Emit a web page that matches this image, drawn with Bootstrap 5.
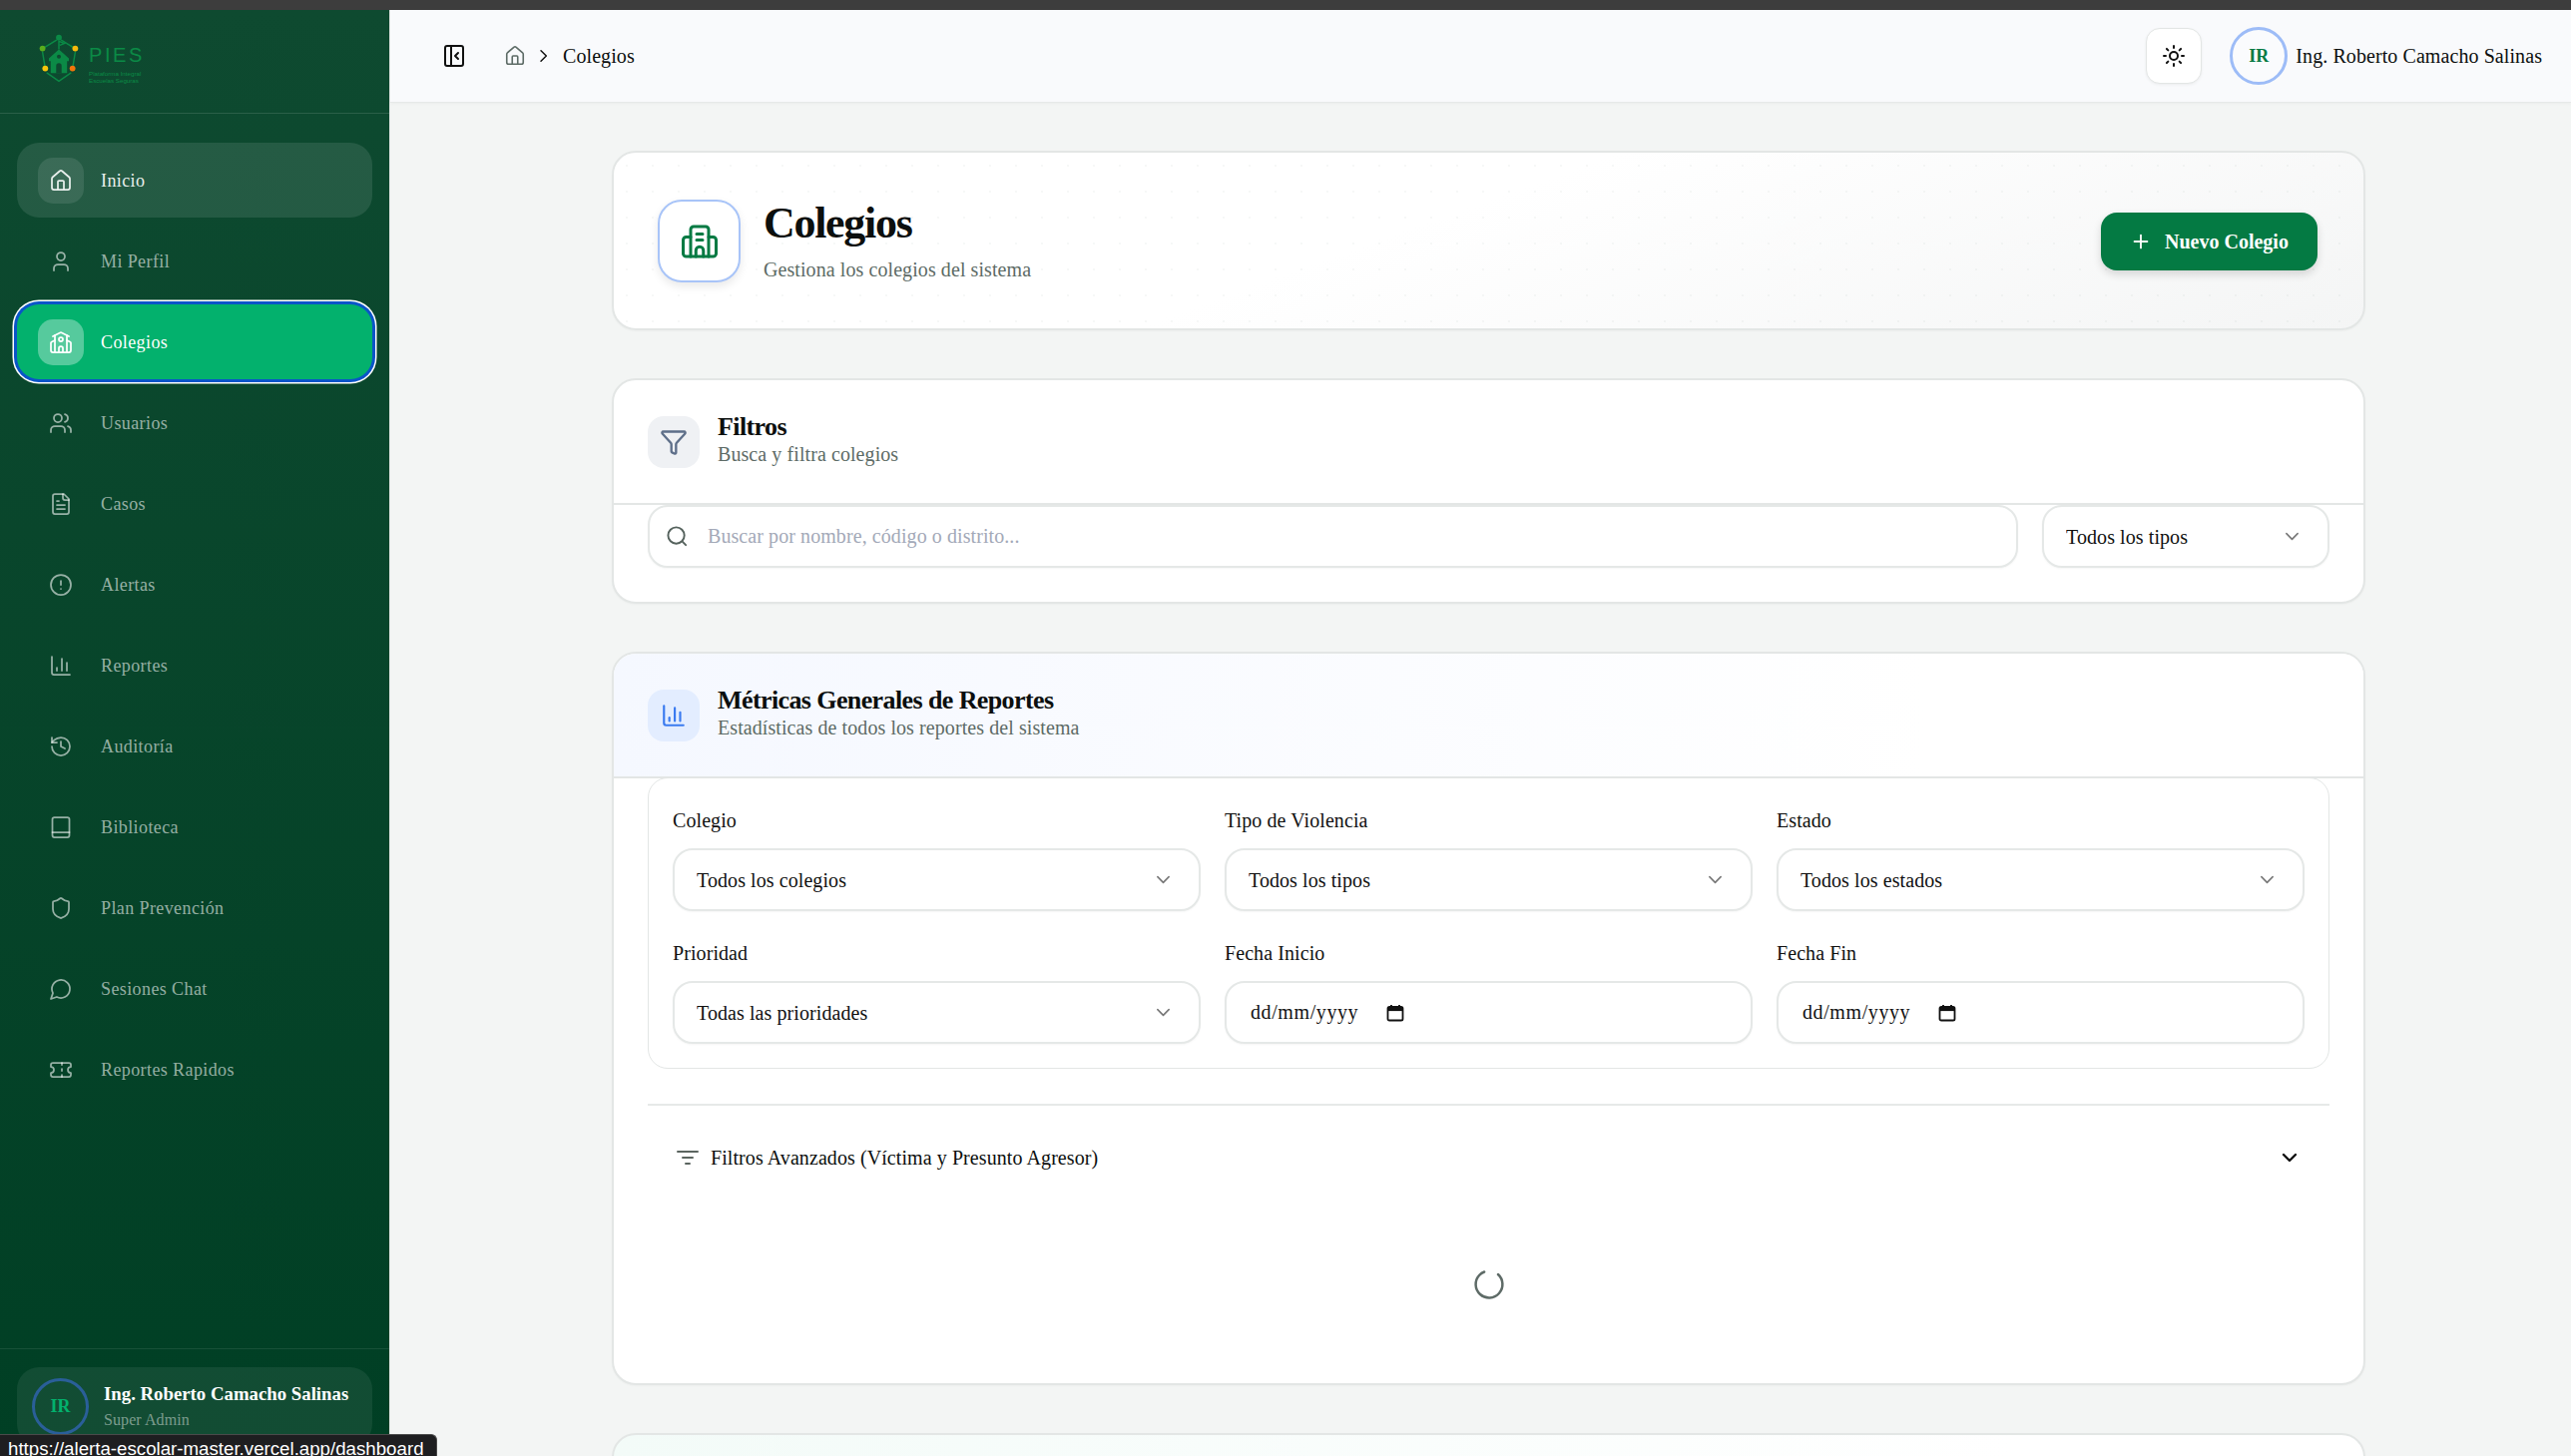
<!DOCTYPE html>
<html lang="es">
<head>
<meta charset="utf-8">
<title>Colegios</title>
<link href="https://cdn.jsdelivr.net/npm/bootstrap@5.3.0/dist/css/bootstrap.min.css" rel="stylesheet">
<style>
html,body{height:1459px;overflow:hidden}
body{background:#f3f5f4;font-family:"Liberation Serif","Times New Roman",serif;font-size:20px;color:#0c0f0e;letter-spacing:.08px}
.topstrip{height:10px;background:#3d3d3d;flex:none}
.shell{height:1449px;overflow:hidden}
.side{width:391px;flex:none;background:linear-gradient(180deg,#0e4a30 0%,#003f24 100%);height:100%;overflow:hidden;border-right:1px solid #dfe5e2}
.side-head{height:104px;flex:none;border-bottom:1px solid rgba(255,255,255,.12);padding:24px 0 0 38px}
.logo-mark{margin-right:9px;flex:none}
.logo-t{color:#0b8a46;line-height:1;letter-spacing:0}
.logo-big{font-family:"Liberation Sans",sans-serif;font-size:20px;letter-spacing:2.6px;margin-top:11px}
.logo-small{font-family:"Liberation Sans",sans-serif;font-size:6.2px;line-height:7.4px;margin-top:5px;white-space:pre-line}
.side-nav{flex:1 1 0;padding:29px 17px 0;gap:6px}
.side-nav .nav-link{height:75px;border-radius:22px;padding:2px 21px 0;display:flex;align-items:center;gap:17px;color:rgba(255,255,255,.58);font-size:18px;letter-spacing:.4px}
.side-nav .nav-link svg{width:24px;height:24px;stroke-width:1.75}
.ico-slot{width:46px;height:46px;border-radius:15px;flex:none;display:flex;align-items:center;justify-content:center;margin-top:-2px}
.side-nav .is-home{background:rgba(255,255,255,.1);color:#e9efec}
.side-nav .is-home .ico-slot{background:rgba(255,255,255,.1)}
.side-nav .is-on{background:#03b16d;color:#fff;box-shadow:0 0 0 3px #0a55c8,0 0 0 4.5px #fff}
.side-nav .is-on .ico-slot{background:rgba(255,255,255,.33)}
.side-foot{height:108px;flex:none;border-top:1px solid rgba(255,255,255,.09);padding:18px 17px 0}
.user-tile{height:79px;border-radius:22px;background:rgba(255,255,255,.07);padding:11px 15px;gap:15px}
.ava-s{width:57px;height:57px;border-radius:50%;border:3px solid #2a5f99;color:#03b16d;font-weight:700;font-size:18px;flex:none}
.uname{color:#fff;font-weight:700;font-size:18.8px;line-height:22px;letter-spacing:0;margin-top:1px}
.urole{color:rgba(255,255,255,.45);font-size:16px;line-height:22px;margin-top:4px}
.tip-url{position:fixed;left:0;bottom:0;width:438px;height:22px;background:#1e1e20;border:1px solid #4a4a4a;border-left:0;border-bottom:0;border-radius:0 6px 0 0;color:#fff;font-family:"Liberation Sans",sans-serif;font-size:18.7px;letter-spacing:0;line-height:28px;padding-left:8px;overflow:hidden;white-space:nowrap;z-index:10}
.top-bar{height:93px;flex:none;background:#f9fafc;border-bottom:1px solid #e6e9e8;box-shadow:0 1px 3px rgba(0,0,0,.04);padding:0 29px 0 52px}
.bar-ico{width:24px;height:24px;flex:none}
.crumb{margin-left:38px;gap:9px}
.crumb-now{margin-left:3px}
.theme-btn{width:56px;height:56px;background:#fff;border:1px solid #e3e6e5;border-radius:14px;box-shadow:0 1px 3px rgba(0,0,0,.06);padding:0;display:flex;align-items:center;justify-content:center;color:#111}
.ava-top{width:58px;height:58px;border-radius:50%;border:3px solid #9dbcf7;color:#047a43;font-weight:700;font-size:18px;margin:0 8px 0 28px;background:#fafbfd}
.page-area{padding:48px 206px 0 222px;overflow:hidden;flex:1 1 0}
.pane{border:2px solid #e3e6e5;border-radius:24px;background:#fff;margin-bottom:48px;box-shadow:0 1px 2px rgba(0,0,0,.03)}
.hero{height:180px;padding:0 46px 0 44px;background-color:transparent;background-image:radial-gradient(rgba(20,60,40,.035) 1px,transparent 1.2px),linear-gradient(160deg,#fff 45%,#f4f5f5 100%);background-size:26px 26px,100% 100%}
.hero-ico{width:83px;height:83px;border:2px solid #a8c4f8;border-radius:24px;background:#fff;box-shadow:0 4px 10px rgba(0,0,0,.09);color:#047a43;flex:none;margin-right:23px;margin-top:1px}
.hero-txt{margin-bottom:2px}
.hero h1{font-size:44px;font-weight:700;letter-spacing:-1.3px;line-height:50px;margin:0}
.hero p{font-size:20px;color:#5d6b66;line-height:24px;margin:9px 0 0}
.add-btn{width:217px;height:58px;background:#047a43;border:0;border-radius:16px;color:#fff;font-weight:700;font-size:20px;box-shadow:0 4px 8px rgba(0,0,0,.14);gap:13px;padding:0;margin-top:1px;display:flex;align-items:center;justify-content:center}
.add-btn:hover{background:#047a43;color:#fff}
.pane-head{height:125px;padding:0 34px;background:transparent;border-bottom:2px solid #e3e6e5;border-radius:22px 22px 0 0;gap:18px}
.metrics-head{background:linear-gradient(90deg,#f5f8ff 0%,#fff 75%)}
.head-txt{margin-bottom:6px}
.sq-ico{width:52px;height:52px;border-radius:16px;flex:none}
.sq-gray{background:#eff1f4;color:#5e6f89}
.sq-blue{background:#e3edff;color:#3b7bf0}
.pane-title{font-size:26px;font-weight:700;letter-spacing:-.6px;line-height:30px;margin:0}
.pane-sub{font-size:20px;color:#5d6b66;line-height:24px;margin:0}
.f-ctl{height:63px;border:2px solid #e5e8e7;border-radius:20px;font-size:20px;letter-spacing:.08px;color:#111;padding:0 22px;box-shadow:0 1px 2px rgba(0,0,0,.04);background-color:#fff}
select.f-ctl{background-image:url("data:image/svg+xml,%3csvg xmlns='http://www.w3.org/2000/svg' viewBox='0 0 16 16'%3e%3cpath fill='none' stroke='%23777' stroke-linecap='round' stroke-linejoin='round' stroke-width='1.7' d='m2 5 6 6 6-6'/%3e%3c/svg%3e");background-position:right 28px center;background-size:15px 15px}
.f-ctl::placeholder{color:#a3a9b8}
.date-ctl{padding-left:24px;letter-spacing:.6px}
.cal-ico{position:absolute;left:161px;bottom:21px;width:20px;height:20px;pointer-events:none}
.search-ico{position:absolute;left:18px;top:20px;width:23px;height:23px;color:#55625d}
.filter-body{padding:0 34px 34px;gap:24px}
.metrics-body{padding:0 34px 24px}
.inner-box{border:1px solid #e3e6e5;border-radius:20px;padding:27px 24px 24px;margin-top:-1px}
.inner-row{--bs-gutter-x:24px;--bs-gutter-y:27px}
.f-label{font-size:20px;line-height:30px;margin:0 0 13px;color:#111}
.rule-line{height:2px;background:#e6e9e8;margin-top:35px}
.adv-row{height:104px;padding:0 28px 0 28px;gap:11px;font-size:20px}
.spin-zone{height:150px}
.mint-pane{height:60px;border-radius:24px;background:linear-gradient(90deg,#f3fbf8,#fff 80%);margin:0}
</style>
</head>
<body class="d-flex flex-column">
<svg width="0" height="0" class="position-absolute">
<defs>
<g id="i-house"><path d="M15 21v-8a1 1 0 0 0-1-1h-4a1 1 0 0 0-1 1v8"/><path d="M3 10a2 2 0 0 1 .709-1.528l7-5.999a2 2 0 0 1 2.582 0l7 5.999A2 2 0 0 1 21 10v9a2 2 0 0 1-2 2H5a2 2 0 0 1-2-2z"/></g>
<g id="i-chart"><path d="M3 3v16a2 2 0 0 0 2 2h16"/><path d="M18 17V9"/><path d="M13 17V5"/><path d="M8 17v-3"/></g>
<g id="i-chev"><path d="m6 9 6 6 6-6"/></g>
<g id="i-cal"><rect x="2.5" y="4" width="15" height="13.5" rx="1.6" fill="none" stroke="#111" stroke-width="1.8"/><path d="M2.5 4.5h15v3.6h-15z" fill="#111"/><path d="M6 2v3M14 2v3" stroke="#111" stroke-width="1.8"/></g>
</defs>
</svg>
<div class="topstrip"></div>
<div class="shell d-flex">
<aside class="side d-flex flex-column">
  <div class="side-head d-flex">
    <svg class="logo-mark" width="42" height="51" viewBox="0 0 46 56" fill="none">
      <path d="M7 15 20 7M26 7l13 8M5 20l3 18M41 20l-3 18M10 43l13 9 13-9" stroke="#0b8a46" stroke-width="1.6" stroke-linecap="round"/>
      <path d="M12 27 23 17l11 10v3h-2v13H14V30h-2z" fill="#0b8a46"/>
      <path d="M23 17V8l6 2.5-5 2" stroke="#0b8a46" stroke-width="1.6"/>
      <circle cx="23" cy="25" r="2.2" fill="#0e4a30"/><path d="M20 43v-8a3 3 0 0 1 6 0v8z" fill="#0e4a30"/>
      <circle cx="23" cy="4" r="3.2" fill="#0b8a46"/><circle cx="5" cy="16" r="3.2" fill="#5aad1d"/><circle cx="41" cy="16" r="3.2" fill="#f8b90b"/><circle cx="8" cy="38" r="3.2" fill="#f8c40b"/><circle cx="38" cy="38" r="3.2" fill="#f2760b"/>
    </svg>
    <div class="logo-t">
      <div class="logo-big">PIES</div>
      <div class="logo-small">Plataforma Integral
Escuelas Seguras</div>
    </div>
  </div>
  <nav class="nav flex-column flex-nowrap side-nav">
    <a class="nav-link is-home" href="#"><span class="ico-slot"><svg viewBox="0 0 24 24" fill="none" stroke="currentColor" stroke-linecap="round" stroke-linejoin="round"><use href="#i-house"/></svg></span>Inicio</a>
    <a class="nav-link" href="#"><span class="ico-slot"><svg viewBox="0 0 24 24" fill="none" stroke="currentColor" stroke-linecap="round" stroke-linejoin="round"><path d="M19 21v-2a4 4 0 0 0-4-4H9a4 4 0 0 0-4 4v2"/><circle cx="12" cy="7" r="4"/></svg></span>Mi Perfil</a>
    <a class="nav-link is-on" href="#"><span class="ico-slot"><svg viewBox="0 0 24 24" fill="none" stroke="currentColor" stroke-linecap="round" stroke-linejoin="round"><path d="M14 22v-4a2 2 0 1 0-4 0v4"/><path d="m18 10 3.447 1.724a1 1 0 0 1 .553.894V20a2 2 0 0 1-2 2H4a2 2 0 0 1-2-2v-7.382a1 1 0 0 1 .553-.894L6 10"/><path d="M18 5v17"/><path d="m4 6 7.106-3.553a2 2 0 0 1 1.788 0L20 6"/><path d="M6 5v17"/><circle cx="12" cy="9" r="2"/></svg></span>Colegios</a>
    <a class="nav-link" href="#"><span class="ico-slot"><svg viewBox="0 0 24 24" fill="none" stroke="currentColor" stroke-linecap="round" stroke-linejoin="round"><path d="M16 21v-2a4 4 0 0 0-4-4H6a4 4 0 0 0-4 4v2"/><circle cx="9" cy="7" r="4"/><path d="M22 21v-2a4 4 0 0 0-3-3.87"/><path d="M16 3.13a4 4 0 0 1 0 7.75"/></svg></span>Usuarios</a>
    <a class="nav-link" href="#"><span class="ico-slot"><svg viewBox="0 0 24 24" fill="none" stroke="currentColor" stroke-linecap="round" stroke-linejoin="round"><path d="M15 2H6a2 2 0 0 0-2 2v16a2 2 0 0 0 2 2h12a2 2 0 0 0 2-2V7Z"/><path d="M14 2v4a2 2 0 0 0 2 2h4"/><path d="M10 9H8"/><path d="M16 13H8"/><path d="M16 17H8"/></svg></span>Casos</a>
    <a class="nav-link" href="#"><span class="ico-slot"><svg viewBox="0 0 24 24" fill="none" stroke="currentColor" stroke-linecap="round" stroke-linejoin="round"><circle cx="12" cy="12" r="10"/><path d="M12 8v4"/><path d="M12 16h.01"/></svg></span>Alertas</a>
    <a class="nav-link" href="#"><span class="ico-slot"><svg viewBox="0 0 24 24" fill="none" stroke="currentColor" stroke-linecap="round" stroke-linejoin="round"><use href="#i-chart"/></svg></span>Reportes</a>
    <a class="nav-link" href="#"><span class="ico-slot"><svg viewBox="0 0 24 24" fill="none" stroke="currentColor" stroke-linecap="round" stroke-linejoin="round"><path d="M3 12a9 9 0 1 0 9-9 9.75 9.75 0 0 0-6.74 2.74L3 8"/><path d="M3 3v5h5"/><path d="M12 7v5l4 2"/></svg></span>Auditoría</a>
    <a class="nav-link" href="#"><span class="ico-slot"><svg viewBox="0 0 24 24" fill="none" stroke="currentColor" stroke-linecap="round" stroke-linejoin="round"><rect x="3.5" y="2" width="17" height="20" rx="2"/><path d="M3.5 17h17"/></svg></span>Biblioteca</a>
    <a class="nav-link" href="#"><span class="ico-slot"><svg viewBox="0 0 24 24" fill="none" stroke="currentColor" stroke-linecap="round" stroke-linejoin="round"><path d="M20 13c0 5-3.5 7.5-7.66 8.95a1 1 0 0 1-.67-.01C7.5 20.5 4 18 4 13V6a1 1 0 0 1 1-1c2 0 4.5-1.2 6.24-2.72a1.17 1.17 0 0 1 1.52 0C14.51 3.81 17 5 19 5a1 1 0 0 1 1 1z"/></svg></span>Plan Prevención</a>
    <a class="nav-link" href="#"><span class="ico-slot"><svg viewBox="0 0 24 24" fill="none" stroke="currentColor" stroke-linecap="round" stroke-linejoin="round"><path d="M7.9 20A9 9 0 1 0 4 16.1L2 22Z"/></svg></span>Sesiones Chat</a>
    <a class="nav-link" href="#"><span class="ico-slot"><svg viewBox="0 0 24 24" fill="none" stroke="currentColor" stroke-linecap="round" stroke-linejoin="round"><path d="M2 9a3 3 0 0 1 0 6v2a2 2 0 0 0 2 2h16a2 2 0 0 0 2-2v-2a3 3 0 0 1 0-6V7a2 2 0 0 0-2-2H4a2 2 0 0 0-2 2Z"/><path d="M13 5v2"/><path d="M13 17v2"/><path d="M13 11v2"/></svg></span>Reportes Rapidos</a>
  </nav>
  <div class="side-foot">
    <div class="user-tile d-flex align-items-center">
      <div class="ava-s d-flex align-items-center justify-content-center">IR</div>
      <div>
        <div class="uname">Ing. Roberto Camacho Salinas</div>
        <div class="urole">Super Admin</div>
      </div>
    </div>
  </div>
</aside>
<div class="flex-grow-1 d-flex flex-column" style="min-width:0">
  <header class="top-bar navbar flex-nowrap">
    <div class="d-flex align-items-center">
      <svg class="bar-ico" viewBox="0 0 24 24" fill="none" stroke="#111" stroke-width="2" stroke-linecap="round" stroke-linejoin="round"><rect width="18" height="20" x="3" y="2" rx="2"/><path d="M9 2v20"/><path d="m16 15-3-3 3-3"/></svg>
      <div class="crumb d-flex align-items-center">
        <svg class="bar-ico" style="width:22px;height:22px" viewBox="0 0 24 24" fill="none" stroke="#5d6b66" stroke-width="1.75" stroke-linecap="round" stroke-linejoin="round"><use href="#i-house"/></svg>
        <svg style="width:16px;height:16px" viewBox="0 0 24 24" fill="none" stroke="#111" stroke-width="2.2" stroke-linecap="round" stroke-linejoin="round"><path d="m9 4 8 8-8 8"/></svg>
        <span class="crumb-now">Colegios</span>
      </div>
    </div>
    <div class="d-flex align-items-center">
      <button class="btn theme-btn" type="button" aria-label="Tema"><svg width="24" height="24" viewBox="0 0 24 24" fill="none" stroke="currentColor" stroke-width="2" stroke-linecap="round"><circle cx="12" cy="12" r="4"/><path d="M12 2v2M12 20v2M4.93 4.93l1.41 1.41M17.66 17.66l1.41 1.41M2 12h2M20 12h2M6.34 17.66l-1.41 1.41M19.07 4.93l-1.41 1.41"/></svg></button>
      <div class="ava-top d-flex align-items-center justify-content-center">IR</div>
      <span>Ing. Roberto Camacho Salinas</span>
    </div>
  </header>
  <main class="page-area">
    <section class="pane hero d-flex align-items-center justify-content-between">
      <div class="d-flex align-items-center">
        <div class="hero-ico d-flex align-items-center justify-content-center">
          <svg width="38" height="36" viewBox="0 0 25 24" fill="none" stroke="currentColor" stroke-width="2" stroke-linecap="round" stroke-linejoin="round"><path d="M6.5 22V4a2 2 0 0 1 2-2h8a2 2 0 0 1 2 2v18"/><path d="M6.5 9h-3a2 2 0 0 0-2 2v9a2 2 0 0 0 2 2h18a2 2 0 0 0 2-2v-9a2 2 0 0 0-2-2h-3"/><path d="M10.5 7h4M10.5 11h4"/><path d="M10 22v-4a2.5 2.5 0 0 1 5 0v4"/></svg>
        </div>
        <div class="hero-txt">
          <h1>Colegios</h1>
          <p>Gestiona los colegios del sistema</p>
        </div>
      </div>
      <button class="btn add-btn" type="button"><svg width="22" height="22" viewBox="0 0 24 24" fill="none" stroke="currentColor" stroke-width="2" stroke-linecap="round"><path d="M5 12h14M12 5v14"/></svg>Nuevo Colegio</button>
    </section>

    <section class="pane card">
      <div class="pane-head d-flex align-items-center">
        <div class="sq-ico sq-gray d-flex align-items-center justify-content-center"><svg width="28" height="28" viewBox="0 0 24 24" fill="none" stroke="currentColor" stroke-width="2" stroke-linecap="round" stroke-linejoin="round"><path d="M10 20a1 1 0 0 0 .553.895l2 1A1 1 0 0 0 14 21v-7a2 2 0 0 1 .517-1.341L21.74 4.67A1 1 0 0 0 21 3H3a1 1 0 0 0-.742 1.67l7.225 7.989A2 2 0 0 1 10 14z"/></svg></div>
        <div class="head-txt">
          <h2 class="pane-title">Filtros</h2>
          <p class="pane-sub">Busca y filtra colegios</p>
        </div>
      </div>
      <div class="filter-body d-flex">
        <div class="position-relative flex-grow-1">
          <input class="form-control f-ctl" type="text" placeholder="Buscar por nombre, código o distrito..." style="padding-left:58px">
          <svg class="search-ico" viewBox="0 0 24 24" fill="none" stroke="currentColor" stroke-width="2" stroke-linecap="round" stroke-linejoin="round"><circle cx="11" cy="11" r="8.5"/><path d="m21 21-3.6-3.6"/></svg>
        </div>
        <select class="form-select f-ctl flex-none" style="width:288px"><option>Todos los tipos</option></select>
      </div>
    </section>

    <section class="pane card">
      <div class="pane-head metrics-head d-flex align-items-center">
        <div class="sq-ico sq-blue d-flex align-items-center justify-content-center"><svg width="26" height="26" viewBox="0 0 24 24" fill="none" stroke="currentColor" stroke-width="2" stroke-linecap="round" stroke-linejoin="round"><use href="#i-chart"/></svg></div>
        <div class="head-txt">
          <h2 class="pane-title">Métricas Generales de Reportes</h2>
          <p class="pane-sub">Estadísticas de todos los reportes del sistema</p>
        </div>
      </div>
      <div class="metrics-body">
        <div class="inner-box">
          <div class="row row-cols-3 inner-row">
            <div class="col"><label class="f-label d-block">Colegio</label><select class="form-select f-ctl"><option>Todos los colegios</option></select></div>
            <div class="col"><label class="f-label d-block">Tipo de Violencia</label><select class="form-select f-ctl"><option>Todos los tipos</option></select></div>
            <div class="col"><label class="f-label d-block">Estado</label><select class="form-select f-ctl"><option>Todos los estados</option></select></div>
            <div class="col"><label class="f-label d-block">Prioridad</label><select class="form-select f-ctl"><option>Todas las prioridades</option></select></div>
            <div class="col"><label class="f-label d-block">Fecha Inicio</label><div class="position-relative"><input class="form-control f-ctl date-ctl" type="text" value="dd/mm/yyyy"><svg class="cal-ico" viewBox="0 0 20 20"><use href="#i-cal"/></svg></div></div>
            <div class="col"><label class="f-label d-block">Fecha Fin</label><div class="position-relative"><input class="form-control f-ctl date-ctl" type="text" value="dd/mm/yyyy"><svg class="cal-ico" viewBox="0 0 20 20"><use href="#i-cal"/></svg></div></div>
          </div>
        </div>
        <div class="rule-line"></div>
        <div class="adv-row d-flex align-items-center">
          <svg width="24" height="24" viewBox="0 0 24 24" fill="none" stroke="#5b6560" stroke-width="2" stroke-linecap="round"><path d="M2 6h20M7 12h10M10 18h4"/></svg>
          <span class="flex-grow-1">Filtros Avanzados (Víctima y Presunto Agresor)</span>
          <svg width="24" height="24" viewBox="0 0 24 24" fill="none" stroke="#111" stroke-width="2.4" stroke-linecap="round" stroke-linejoin="round"><use href="#i-chev"/></svg>
        </div>
        <div class="spin-zone d-flex align-items-center justify-content-center">
          <svg width="30" height="30" viewBox="0 0 30 30" fill="none" role="status" aria-label="Cargando"><circle cx="15" cy="15" r="13.4" stroke="#5e6b67" stroke-width="2.5" stroke-linecap="round" stroke-dasharray="69 15.2" transform="rotate(-48 15 15)"/></svg>
        </div>
      </div>
    </section>

    <section class="pane mint-pane"></section>
  </main>
</div>
</div>
<div class="tip-url">https://alerta-escolar-master.vercel.app/dashboard</div>
</body>
</html>
